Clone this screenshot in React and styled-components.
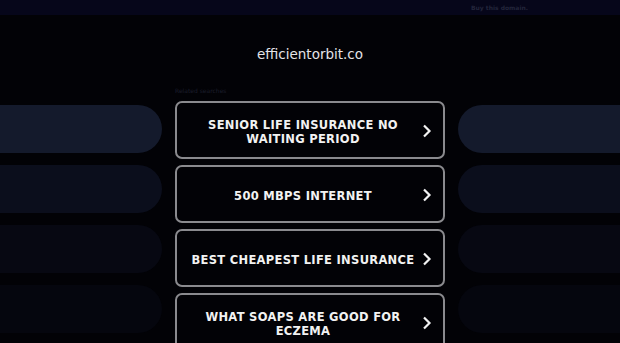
import React from "react";
import styled, { createGlobalStyle } from "styled-components";

const GlobalStyle = createGlobalStyle`
  html, body {
    margin: 0;
    padding: 0;
    background: #020206;
    overflow: hidden;
  }
  body {
    font-family: "DejaVu Sans", "Liberation Sans", sans-serif;
  }
`;

const Page = styled.div`
  width: 620px;
  height: 343px;
  overflow: hidden;
  background: #020206;
`;

const TopBar = styled.div`
  height: 15px;
  background: #06061a;
  display: flex;
  align-items: center;
  justify-content: flex-end;
  padding-right: 92px;
`;

const BuyLink = styled.span`
  font-size: 6px;
  font-weight: bold;
  color: #23253a;
`;

const Domain = styled.h1`
  margin: 0;
  padding-top: 30px;
  height: 45px;
  box-sizing: border-box;
  text-align: center;
  font-size: 13.5px;
  font-weight: normal;
  color: #e4e4e8;
  line-height: 18px;
`;

const Main = styled.div`
  display: grid;
  grid-template-columns: 1fr 270px 1fr;
  column-gap: 13px;
  padding-top: 26px;
`;

const Side = styled.div`
  display: flex;
  flex-direction: column;
  gap: 12px;
  padding-top: 19px;
  margin: ${(p) => (p.left ? "0 0 0 -40px" : "0 -40px 0 0")};
`;

const Pill = styled.div`
  height: 48px;
  border-radius: 24px;
  background: ${(p) => p.bg};
`;

const Center = styled.div`
  display: flex;
  flex-direction: column;
`;

const Label = styled.div`
  font-size: 6px;
  color: #1c1e2c;
  height: 15px;
  line-height: 10px;
`;

const List = styled.div`
  display: flex;
  flex-direction: column;
  gap: 6px;
`;

const Item = styled.a`
  box-sizing: border-box;
  height: 58px;
  border: 2px solid #8a8a8e;
  border-radius: 7px;
  background: #020206;
  display: flex;
  align-items: center;
  position: relative;
  padding: 3px 28px 0 14px;
  text-decoration: none;
`;

const ItemText = styled.span`
  flex: 1;
  text-align: center;
  color: #f2f2f2;
  font-weight: bold;
  font-size: 11.5px;
  letter-spacing: 0.3px;
  line-height: 14px;
`;

const Chevron = styled.svg`
  position: absolute;
  right: 11px;
  top: 50%;
  margin-top: -6px;
`;

const searches = [
  "SENIOR LIFE INSURANCE NO WAITING PERIOD",
  "500 MBPS INTERNET",
  "BEST CHEAPEST LIFE INSURANCE",
  "WHAT SOAPS ARE GOOD FOR ECZEMA",
];

const pillColors = ["#141a2c", "#0b0e1c", "#070812", "#05060e"];

export default function App() {
  return (
    <Page>
      <GlobalStyle />
      <TopBar>
        <BuyLink>Buy this domain.</BuyLink>
      </TopBar>
      <Domain>efficientorbit.co</Domain>
      <Main>
        <Side left>
          {pillColors.map((c) => (
            <Pill key={c} bg={c} />
          ))}
        </Side>
        <Center>
          <Label>Related searches</Label>
          <List>
            {searches.map((s) => (
              <Item key={s} href="#">
                <ItemText>{s}</ItemText>
                <Chevron width="10" height="14" viewBox="0 0 10 14">
                  <path
                    d="M2 1.5 L7.5 7 L2 12.5"
                    fill="none"
                    stroke="#f2f2f2"
                    strokeWidth="2.2"
                  />
                </Chevron>
              </Item>
            ))}
          </List>
        </Center>
        <Side>
          {pillColors.map((c) => (
            <Pill key={c} bg={c} />
          ))}
        </Side>
      </Main>
    </Page>
  );
}
